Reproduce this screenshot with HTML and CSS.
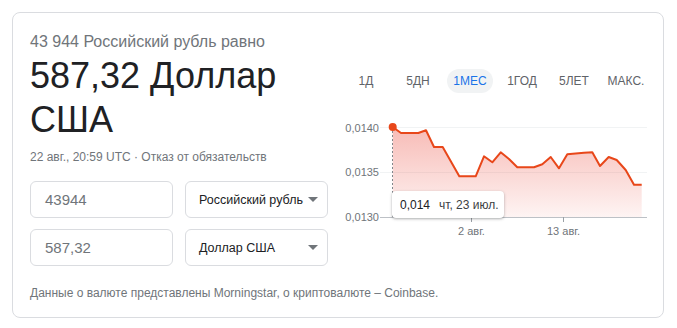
FILE: index.html
```html
<!DOCTYPE html>
<html lang="ru">
<head>
<meta charset="utf-8">
<title>Конвертер валют</title>
<link rel="stylesheet" href="styles.css">
</head>
<body>
<div class="card">
  <div class="main">
    <div class="left">
      <div class="subtitle">43 944 Российский рубль равно</div>
      <div class="amount">587,32 Доллар США</div>
      <div class="date">22 авг., 20:59 UTC · Отказ от обязательств</div>
      <div class="form">
        <div class="field input">43944</div>
        <div class="field select"><span>Российский рубль</span><i class="arrow"></i></div>
        <div class="field input">587,32</div>
        <div class="field select"><span>Доллар США</span><i class="arrow"></i></div>
      </div>
    </div>
    <div class="right">
      <div class="tabs">
        <div class="tab">1Д</div>
        <div class="tab">5ДН</div>
        <div class="tab active"><span>1МЕС</span></div>
        <div class="tab">1ГОД</div>
        <div class="tab">5ЛЕТ</div>
        <div class="tab">МАКС.</div>
      </div>
      <div class="chart">
        <svg width="312" height="130" viewBox="0 0 312 130" xmlns="http://www.w3.org/2000/svg">
          <defs>
            <linearGradient id="fillg" x1="0" y1="0" x2="0" y2="1">
              <stop offset="0" stop-color="#ea4335" stop-opacity="0.36"/>
              <stop offset="1" stop-color="#ea4335" stop-opacity="0.06"/>
            </linearGradient>
          </defs>
          <line x1="40" y1="19.5" x2="307" y2="19.5" stroke="#f1f3f4" stroke-width="1"/>
          <line x1="40" y1="64.5" x2="307" y2="64.5" stroke="#f1f3f4" stroke-width="1"/>
          <text class="ylab" x="39" y="24">0,0140</text>
          <text class="ylab" x="39" y="68">0,0135</text>
          <text class="ylab" x="39" y="113">0,0130</text>
          <path d="M52.7,19 L61,25 L78.3,25 L86,22.3 L94,39 L102.7,39 L119.3,68.3 L135.7,68.3 L144,48.3 L152.3,54.3 L160.7,44.3 L169,51 L177.3,59.3 L194,59.3 L202.3,56.3 L210.7,49 L219,60.3 L227.3,46.3 L244,44.7 L252.3,44.3 L260,58 L268.7,49 L276.7,52 L285.7,62 L294,76.7 L301.7,76.7 L301.7,109 L52.7,109 Z" fill="url(#fillg)"/>
          <line x1="52.5" y1="19" x2="52.5" y2="109" stroke="#80868b" stroke-width="1" stroke-dasharray="2 2"/>
          <path d="M52.7,19 L61,25 L78.3,25 L86,22.3 L94,39 L102.7,39 L119.3,68.3 L135.7,68.3 L144,48.3 L152.3,54.3 L160.7,44.3 L169,51 L177.3,59.3 L194,59.3 L202.3,56.3 L210.7,49 L219,60.3 L227.3,46.3 L244,44.7 L252.3,44.3 L260,58 L268.7,49 L276.7,52 L285.7,62 L294,76.7 L301.7,76.7" fill="none" stroke="#e8471a" stroke-width="2" stroke-linejoin="round"/>
          <circle cx="52.7" cy="19" r="4" fill="#e8471a"/>
          <line x1="40" y1="109.5" x2="307" y2="109.5" stroke="#bdc1c6" stroke-width="1"/>
          <line x1="131.5" y1="109" x2="131.5" y2="114" stroke="#9aa0a6" stroke-width="1"/>
          <line x1="223.5" y1="109" x2="223.5" y2="114" stroke="#9aa0a6" stroke-width="1"/>
          <text class="xlab" x="131.5" y="127">2 авг.</text>
          <text class="xlab" x="223.5" y="127">13 авг.</text>
        </svg>
        <div class="tooltip"><span class="tval">0,014</span><span class="tdate">чт, 23 июл.</span></div>
      </div>
    </div>
  </div>
  <div class="footer">Данные о валюте представлены Morningstar, о криптовалюте – Coinbase.</div>
</div>
</body>
</html>
```

FILE: styles.css
```css
* { box-sizing: border-box; }
body {
  margin: 0;
  background: #fff;
  font-family: "Liberation Sans", Arial, sans-serif;
  color: #202124;
}
.card {
  margin: 12px;
  width: 652px;
  height: 306px;
  border: 1px solid #dadce0;
  border-radius: 8px;
  padding: 17px 11px 0 17px;
}
.main {
  display: flex;
  gap: 12px;
}
.left {
  width: 298px;
}
.subtitle {
  font-size: 16px;
  line-height: 24px;
  color: #70757a;
}
.amount {
  font-size: 36px;
  line-height: 44px;
  color: #202124;
}
.date {
  margin-top: 5px;
  font-size: 12px;
  line-height: 20px;
  color: #70757a;
}
.form {
  margin-top: 14px;
  display: grid;
  grid-template-columns: 143px 143px;
  grid-auto-rows: 37px;
  column-gap: 12px;
  row-gap: 11px;
}
.field {
  border: 1px solid #dadce0;
  border-radius: 6px;
  display: flex;
  align-items: center;
}
.input {
  padding-left: 14px;
  font-size: 15px;
  color: #70757a;
}
.select {
  padding: 0 9px 0 13px;
  justify-content: space-between;
  font-size: 12.5px;
  color: #202124;
  white-space: nowrap;
}
.arrow {
  width: 0;
  height: 0;
  border-left: 5px solid transparent;
  border-right: 5px solid transparent;
  border-top: 5px solid #70757a;
  flex: none;
}
.right {
  width: 312px;
}
.tabs {
  margin-top: 39px;
  display: grid;
  grid-template-columns: repeat(6, 52px);
  height: 24px;
}
.tab {
  display: flex;
  align-items: center;
  justify-content: center;
  font-size: 12px;
  color: #5f6368;
}
.tab.active span {
  background: #f1f3f4;
  color: #1a73e8;
  border-radius: 12px;
  width: 46px;
  height: 24px;
  display: flex;
  align-items: center;
  justify-content: center;
}
.chart {
  margin-top: 15px;
  position: relative;
  height: 130px;
}
.chart svg { display: block; }
.ylab {
  font-family: "Liberation Sans", Arial, sans-serif;
  font-size: 11px;
  fill: #70757a;
  text-anchor: end;
}
.xlab {
  font-family: "Liberation Sans", Arial, sans-serif;
  font-size: 11px;
  fill: #70757a;
  text-anchor: middle;
}
.tooltip {
  position: absolute;
  left: 52px;
  top: 83px;
  height: 27px;
  width: 112px;
  background: #fff;
  border-radius: 4px;
  box-shadow: 0 1px 3px rgba(60, 64, 67, 0.3), 0 1px 2px rgba(60, 64, 67, 0.15);
  display: flex;
  align-items: center;
  padding: 0 8px;
  gap: 9px;
  font-size: 12px;
  white-space: nowrap;
}
.tval { color: #202124; }
.tdate { color: #3c4043; }
.footer {
  margin-top: 19px;
  font-size: 12px;
  line-height: 16px;
  color: #70757a;
}
```
